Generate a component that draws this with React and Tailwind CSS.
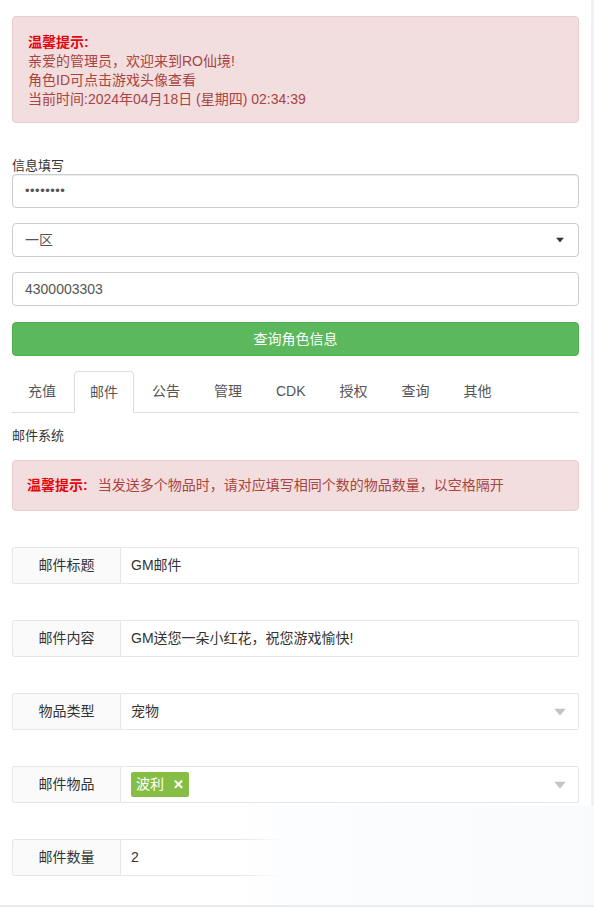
import React from "react";

const font = { fontFamily: '"Liberation Sans", "Noto Sans CJK SC", sans-serif' };

function Caret({ light }) {
  return light ? (
    <svg width="12" height="7" viewBox="0 0 12 7" className="absolute right-[12px] top-1/2 -translate-y-1/2">
      <path d="M0 0 L12 0 L6 7 Z" fill="#c4c4c4" />
    </svg>
  ) : (
    <svg width="8" height="5" viewBox="0 0 8 5" className="absolute right-[14px] top-1/2 -translate-y-1/2">
      <path d="M0 0 L8 0 L4 5 Z" fill="#333" />
    </svg>
  );
}

function Row({ label, children, select }) {
  return (
    <div className="mt-[36px] flex h-[37px] text-[14px] text-[#333]">
      <div className="w-[109px] shrink-0 flex items-center justify-center bg-[#fafafa] border border-[#e6e6e6] rounded-l-[2px]">
        {label}
      </div>
      <div className="relative flex-1 flex items-center pl-[10px] border border-l-0 border-[#e6e6e6] rounded-r-[2px] bg-white">
        {children}
        {select && <Caret light />}
      </div>
    </div>
  );
}

export default function App() {
  const tabs = ["充值", "邮件", "公告", "管理", "CDK", "授权", "查询", "其他"];
  return (
    <div className="relative w-[594px] h-[907px] overflow-hidden bg-white flex" style={font}>
      <div className="flex-1 flex flex-col px-[12px] pt-[16px]">
        <div className="h-[107px] bg-[#f2dede] border border-[#ebccd1] rounded-[4px] px-[15px] pt-[16px] text-[14px] leading-[19px] text-[#a94442]">
          <div className="font-bold text-[#e4050f]">温馨提示:</div>
          <div>亲爱的管理员，欢迎来到RO仙境!</div>
          <div>角色ID可点击游戏头像查看</div>
          <div>当前时间:2024年04月18日 (星期四) 02:34:39</div>
        </div>

        <div className="mt-[35px] text-[13px] leading-[16px] text-[#333]">信息填写</div>
        <div className="h-[34px] border border-[#ccc] rounded-[4px] flex items-center pl-[12px] text-[14px] text-[#555] shadow-[inset_0_1px_1px_rgba(0,0,0,0.075)]">
          <span className="tracking-[0.5px] text-[13px]">••••••••</span>
        </div>
        <div className="relative mt-[15px] h-[34px] border border-[#ccc] rounded-[4px] flex items-center pl-[12px] text-[14px] text-[#555]">
          一区
          <Caret />
        </div>
        <div className="mt-[15px] h-[34px] border border-[#ccc] rounded-[4px] flex items-center pl-[12px] text-[14px] text-[#555]">
          4300003303
        </div>
        <div className="mt-[16px] h-[34px] bg-[#5cb85c] border border-[#4cae4c] rounded-[4px] flex items-center justify-center text-[14px] text-white">
          查询角色信息
        </div>

        <div className="mt-[15px] flex border-b border-[#ddd] h-[42px]">
          {tabs.map((t, i) => (
            <div
              key={t}
              className={`mr-[2px] h-[41px] px-[15px] flex items-center text-[14px] text-[#555] rounded-t-[4px] border ${
                i === 1 ? "border-[#ddd] border-b-white bg-white -mb-px h-[42px]" : "border-transparent"
              }`}
            >
              {t}
            </div>
          ))}
        </div>

        <div className="mt-[13px] text-[13px] leading-[20px] text-[#333]">邮件系统</div>

        <div className="mt-[14px] h-[51px] bg-[#f2dede] border border-[#ebccd1] rounded-[4px] px-[14px] flex items-center text-[14px] text-[#a94442]">
          <span className="font-bold text-[#e4050f] mr-[10px]">温馨提示:</span>
          当发送多个物品时，请对应填写相同个数的物品数量，以空格隔开
        </div>

        <Row label="邮件标题">GM邮件</Row>
        <Row label="邮件内容">GM送您一朵小红花，祝您游戏愉快!</Row>
        <Row label="物品类型" select>宠物</Row>
        <Row label="邮件物品" select>
          <span className="h-[25px] px-[5px] flex items-center gap-[9px] bg-[#86be45] text-white rounded-[2px] text-[14px]">
            波利<span className="text-[13px] font-bold">✕</span>
          </span>
        </Row>
        <Row label="邮件数量">2</Row>
      </div>
      <div className="w-[3px] bg-[#eef1f5]" />
      <div className="absolute left-[240px] top-[806px] right-0 bottom-0 bg-linear-to-r from-white/0 via-[#fcfdfe] via-[12%] to-[#f8fafc]" />
      <div className="absolute left-0 right-0 bottom-0 h-[2px] bg-[#e9edf1]" />
    </div>
  );
}
